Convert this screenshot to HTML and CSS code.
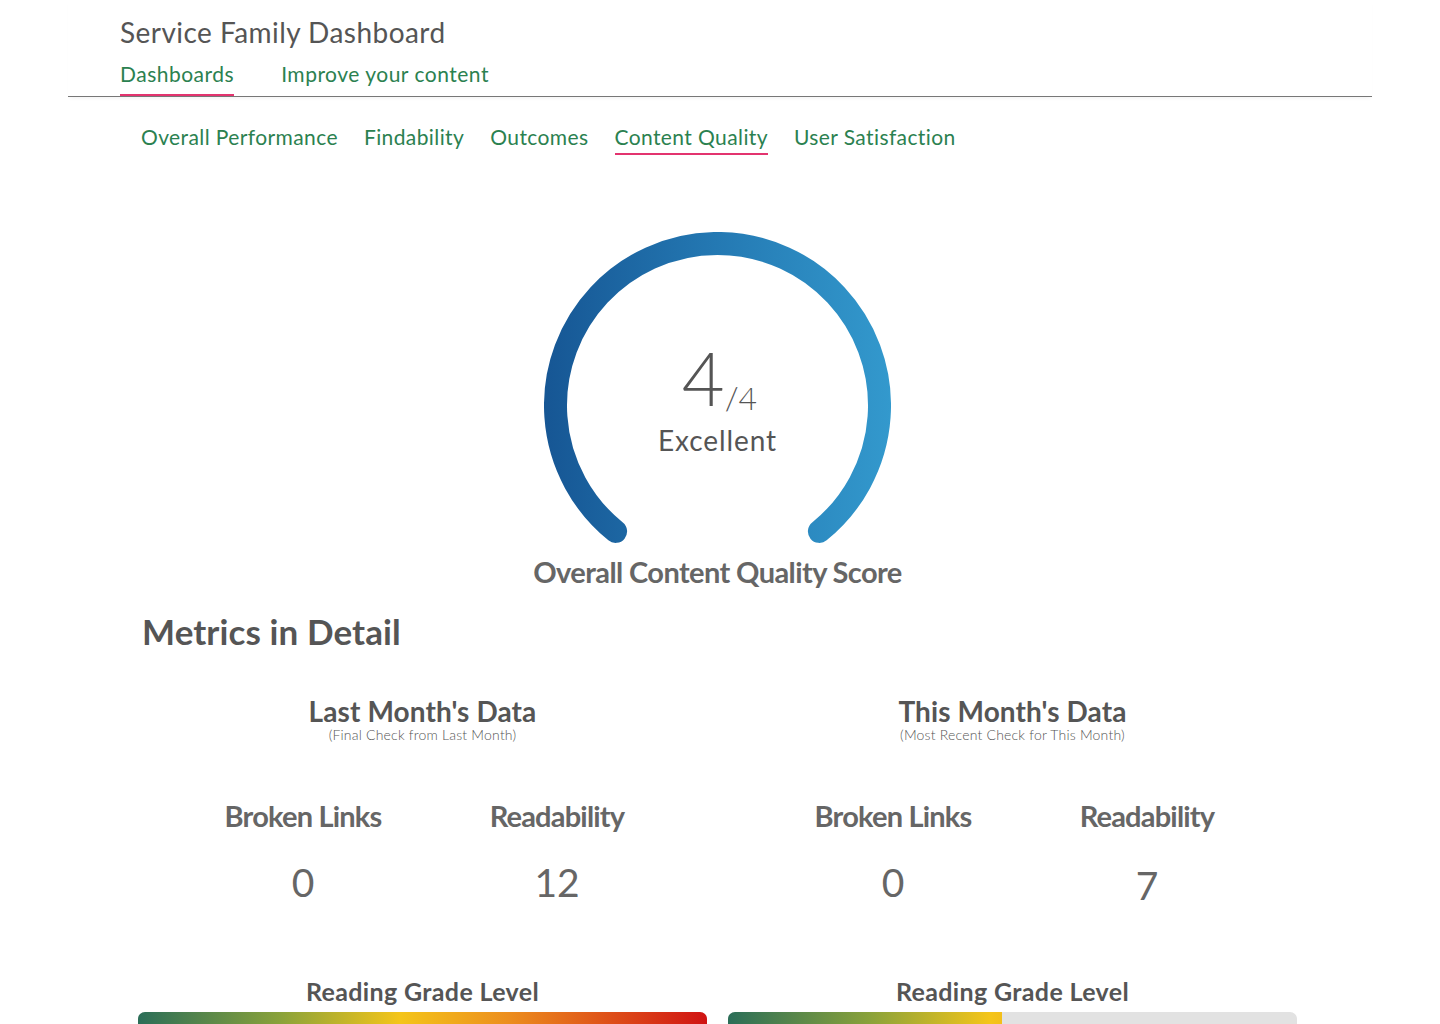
FILE: index.html
```html
<!DOCTYPE html>
<html lang="en">
<head>
<meta charset="utf-8">
<title>Service Family Dashboard</title>
<link rel="stylesheet" href="styles.css">
</head>
<body>
<header class="header">
  <h1 class="title">Service Family Dashboard</h1>
  <nav class="topnav">
    <a class="topnav-item active" href="#">Dashboards</a>
    <a class="topnav-item" href="#">Improve your content</a>
  </nav>
</header>
<main class="main">
  <nav class="subnav">
    <a class="subnav-item" href="#">Overall Performance</a>
    <a class="subnav-item" href="#">Findability</a>
    <a class="subnav-item" href="#">Outcomes</a>
    <a class="subnav-item active" href="#">Content Quality</a>
    <a class="subnav-item" href="#">User Satisfaction</a>
  </nav>

  <section class="gauge-section">
    <div class="gauge">
      <svg class="gauge-svg" width="347" height="314" viewBox="0 0 347 314">
        <defs>
          <linearGradient id="gaugeGrad" gradientUnits="userSpaceOnUse" x1="0" y1="0" x2="347" y2="0">
            <stop offset="0" stop-color="#165694"/>
            <stop offset="0.5" stop-color="#2479b3"/>
            <stop offset="1" stop-color="#3399cd"/>
          </linearGradient>
        </defs>
        <path d="M 71.6 299.4 A 162 162 0 1 1 275.4 299.4" fill="none" stroke="url(#gaugeGrad)" stroke-width="23" stroke-linecap="round"/>
      </svg>
      <div class="gauge-text">
        <div class="score"><span class="score-big">4</span><span class="score-small">/4</span></div>
        <div class="score-label">Excellent</div>
      </div>
    </div>
    <h2 class="gauge-caption">Overall Content Quality Score</h2>
  </section>

  <section class="metrics">
    <h2 class="metrics-title">Metrics in Detail</h2>
    <div class="metrics-grid">
      <div class="month">
        <h3 class="month-title">Last Month's Data</h3>
        <p class="month-sub">(Final Check from Last Month)</p>
        <div class="pair">
          <div class="metric">
            <div class="metric-label">Broken Links</div>
            <div class="metric-value">0</div>
          </div>
          <div class="metric">
            <div class="metric-label">Readability</div>
            <div class="metric-value">12</div>
          </div>
        </div>
        <h4 class="grade-title">Reading Grade Level</h4>
        <div class="bar"><div class="bar-fill" style="width:100%"></div></div>
      </div>
      <div class="month">
        <h3 class="month-title">This Month's Data</h3>
        <p class="month-sub">(Most Recent Check for This Month)</p>
        <div class="pair">
          <div class="metric">
            <div class="metric-label">Broken Links</div>
            <div class="metric-value">0</div>
          </div>
          <div class="metric">
            <div class="metric-label">Readability</div>
            <div class="metric-value seven">7</div>
          </div>
        </div>
        <h4 class="grade-title">Reading Grade Level</h4>
        <div class="bar"><div class="bar-fill" style="width:48.2%"></div></div>
      </div>
    </div>
  </section>
</main>
</body>
</html>
```
FILE: styles.css
```css
* { box-sizing: border-box; }
html, body { margin: 0; padding: 0; background: #fff; }
body {
  font-family: Lato, "Open Sans", sans-serif;
  color: #555;
  width: 1440px;
  height: 1024px;
  overflow: hidden;
}
a { text-decoration: none; }

.header {
  margin: 0 68px;
  padding: 0 52px;
  border-bottom: 1px solid #777;
  box-shadow: 0 3px 4px -2px rgba(0,0,0,0.06);
}
.title {
  margin: 0;
  padding-top: 15px;
  font-size: 28px;
  font-weight: 400;
  line-height: 34px;
  color: #555;
  letter-spacing: 0.45px;
}
.topnav {
  display: flex;
  gap: 47px;
  margin-top: 13px;
}
.topnav-item {
  font-size: 21px;
  line-height: 24px;
  color: #2b8150;
  padding-bottom: 8px;
  border-bottom: 2px solid transparent;
  margin-bottom: 0;
  letter-spacing: 0.5px;
}
.topnav-item.active { border-bottom-color: #e3346f; }

.main { padding: 0 0 0 141px; }

.subnav {
  display: flex;
  gap: 26px;
  margin-top: 28px;
}
.subnav-item {
  font-size: 21px;
  line-height: 24px;
  color: #2b8150;
  padding-bottom: 4px;
  border-bottom: 2px solid transparent;
  letter-spacing: 0.4px;
}
.subnav-item.active { border-bottom-color: #e3346f; }

.gauge-section {
  width: 1159px;
  margin-left: -3px;
  display: flex;
  flex-direction: column;
  align-items: center;
  padding-top: 77px;
}
.gauge {
  position: relative;
  width: 347px;
  height: 314px;
}
.gauge-svg { display: block; }
.gauge-text {
  position: absolute;
  left: 0;
  right: 0;
  top: 111px;
  text-align: center;
  color: #555;
}
.score {
  line-height: 70px;
  height: 70px;
  padding-left: 4px;
}
.score-big {
  font-size: 74px;
  font-weight: 300;
  letter-spacing: -1px;
}
.score-small {
  font-size: 32px;
  font-weight: 300;
  position: relative;
  top: 4px;
  margin-left: 1px;
}
.score-label {
  font-size: 28px;
  line-height: 32px;
  margin-top: 11px;
  letter-spacing: 0.9px;
}
.gauge-caption {
  margin: 9px 0 0;
  font-size: 29px;
  line-height: 34px;
  font-weight: 700;
  color: #666;
  letter-spacing: -0.6px;
}

.metrics { width: 1159px; margin-left: -3px; }
.metrics-title {
  margin: 21px 0 0 4px;
  font-size: 35px;
  line-height: 42px;
  font-weight: 700;
  color: #555;
  letter-spacing: 0.1px;
}
.metrics-grid {
  display: grid;
  grid-template-columns: 569px 569px;
  column-gap: 21px;
  margin-top: 44px;
}
.month { display: flex; flex-direction: column; align-items: stretch; }
.month-title {
  margin: 0;
  text-align: center;
  font-size: 28px;
  line-height: 30px;
  font-weight: 700;
  color: #555;
  letter-spacing: 0.1px;
}
.month-sub {
  margin: 1px 0 0;
  text-align: center;
  font-size: 14px;
  line-height: 16px;
  font-weight: 300;
  color: #555;
  letter-spacing: 0.2px;
}
.pair {
  display: grid;
  grid-template-columns: 254px 254px;
  padding-left: 38px;
  margin-top: 56px;
}
.metric { text-align: center; }
.metric-label {
  font-size: 29px;
  line-height: 34px;
  font-weight: 700;
  color: #666;
  letter-spacing: -0.8px;
}
.metric-value {
  margin-top: 27px;
  font-size: 39px;
  line-height: 44px;
  font-weight: 400;
  color: #666;
}
.metric-value.seven { position: relative; top: 3px; }
.grade-title {
  margin: 73px 0 0;
  text-align: center;
  font-size: 25px;
  line-height: 28px;
  font-weight: 700;
  color: #555;
  letter-spacing: 0.35px;
}
.bar {
  margin-top: 7px;
  height: 24px;
  border-radius: 7px;
  background: #e2e2e2;
  overflow: hidden;
}
.bar-fill {
  height: 100%;
  background: linear-gradient(90deg, #2b6e58 0%, #8aa23a 25%, #f4c51a 46%, #ec8e1e 65%, #d01313 100%);
  background-size: 569px 100%;
  background-repeat: no-repeat;
}
```
